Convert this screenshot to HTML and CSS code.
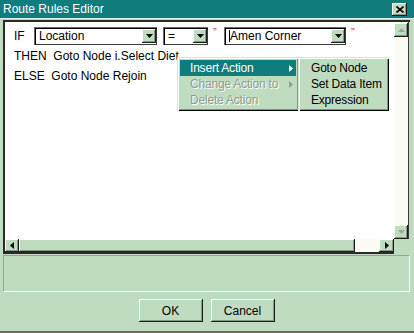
FILE: index.html
```html
<!DOCTYPE html>
<html lang="en">
<head>
    <meta charset="UTF-8">
    <title>Route Rules Editor</title>
    <link rel="stylesheet" href="styles.css">
</head>
<body>
    <div class="window">
        <div class="titlebar">
            <span class="title">Route Rules Editor</span>
            <span class="close raised">
                <svg width="8" height="7" viewBox="0 0 8 7"><path d="M0.5 0.5 L7.5 6.5 M7.5 0.5 L0.5 6.5" stroke="#000" stroke-width="1.6"/></svg>
            </span>
        </div>
        <div class="dialog">
            <div class="panel">
                <div class="rules">
                    <div class="if-row">
                        <span class="kw">IF</span>
                        <div class="combo combo-field">
                            <span class="combo-text">Location</span>
                            <span class="drop raised"><svg width="7" height="4" viewBox="0 0 7 4"><polygon points="0,0 7,0 3.5,4" fill="#000"/></svg></span>
                        </div>
                        <div class="combo combo-op">
                            <span class="combo-text">=</span>
                            <span class="drop raised"><svg width="7" height="4" viewBox="0 0 7 4"><polygon points="0,0 7,0 3.5,4" fill="#000"/></svg></span>
                        </div>
                        <span class="quote">&#8221;</span>
                        <div class="combo combo-value">
                            <span class="combo-text"><span class="caret"></span>Amen Corner</span>
                            <span class="drop raised"><svg width="7" height="4" viewBox="0 0 7 4"><polygon points="0,0 7,0 3.5,4" fill="#000"/></svg></span>
                        </div>
                        <span class="quote">&#8221;</span>
                    </div>
                    <div class="line first">THEN&nbsp;&nbsp;Goto Node i.Select Diet</div>
                    <div class="line">ELSE&nbsp;&nbsp;Goto Node Rejoin</div>

                    <!-- context menu -->
                    <div class="menu">
                        <div class="item active">
                            <span>Insert Action</span>
                            <svg width="4" height="7" viewBox="0 0 4 7"><polygon points="0,0 4,3.5 0,7" fill="#fff"/></svg>
                        </div>
                        <div class="item disabled">
                            <span>Change Action to</span>
                            <svg width="4" height="7" viewBox="0 0 4 7"><polygon points="0,0 4,3.5 0,7" fill="#8e9e8e"/></svg>
                        </div>
                        <div class="item disabled">
                            <span>Delete Action</span>
                        </div>
                    </div>
                    <div class="menu submenu">
                        <div class="item">Goto Node</div>
                        <div class="item">Set Data Item</div>
                        <div class="item">Expression</div>
                    </div>
                </div>
                <div class="vscroll">
                    <span class="sbtn raised"><svg width="7" height="4" viewBox="0 0 7 4"><polygon points="3.5,0 7,4 0,4" fill="#9aa89a"/></svg></span>
                    <span class="sbtn raised"><svg width="7" height="4" viewBox="0 0 7 4"><polygon points="0,0 7,0 3.5,4" fill="#9aa89a"/></svg></span>
                </div>
                <div class="hscroll">
                    <span class="sbtn raised"><svg width="4" height="7" viewBox="0 0 4 7"><polygon points="4,0 0,3.5 4,7" fill="#000"/></svg></span>
                    <span class="thumb raised"></span>
                    <span class="track"></span>
                    <span class="sbtn raised"><svg width="4" height="7" viewBox="0 0 4 7"><polygon points="0,0 4,3.5 0,7" fill="#000"/></svg></span>
                </div>
                <div class="corner"></div>
            </div>
            <div class="status"></div>
            <div class="buttons">
                <button class="raised">OK</button>
                <button class="raised">Cancel</button>
            </div>
        </div>
    </div>
</body>
</html>
```

FILE: styles.css
```css
body {
    margin: 0;
    font-family: "Liberation Sans", Arial, sans-serif;
    font-size: 12px;
    color: #000;
    background: #c0dcc0;
}
.window {
    width: 414px;
    height: 333px;
    box-sizing: border-box;
    background: #c0dcc0;
    border-bottom: 2px solid #7a645c;
    display: flex;
    flex-direction: column;
}
.raised {
    background: #c0dcc0;
    box-shadow: inset -1px -1px 0 #1e1e1e, inset 1px 1px 0 #fff, inset -2px -2px 0 #849c84;
}
.titlebar {
    height: 18px;
    flex: none;
    background: #107c7c;
    color: #fff;
    display: flex;
    align-items: center;
    justify-content: space-between;
    padding: 0 7px 0 3px;
    border-bottom: 1px solid #e2eee2;
}
.close {
    width: 15px;
    height: 13px;
    display: flex;
    align-items: center;
    justify-content: center;
    margin-top: 1px;
}
.dialog {
    flex: 1;
    display: flex;
    flex-direction: column;
    padding: 1px 4px 0 3px;
}
.panel {
    height: 234px;
    box-sizing: border-box;
    border-top: 2px solid #2a2a2a;
    border-left: 2px solid #2a2a2a;
    display: grid;
    grid-template-columns: 1fr 16px;
    grid-template-rows: 1fr 15px;
}
.rules {
    position: relative;
    background: #fff;
    padding: 5px 0 0 9px;
}
.if-row {
    display: flex;
    align-items: center;
    height: 18px;
}
.kw {
    width: 20px;
}
.combo {
    height: 18px;
    box-sizing: border-box;
    background: #fff;
    box-shadow: inset 1px 1px 0 #6a6a6a, inset 2px 2px 0 #000, inset -1px -1px 0 #3a3a3a;
    padding: 2px 1px 2px 2px;
    display: flex;
    align-items: center;
}
.combo-text {
    flex: 1;
    padding-left: 3px;
    display: flex;
    align-items: center;
    white-space: nowrap;
}
.caret {
    width: 1px;
    height: 12px;
    background: #000;
}
.drop {
    width: 14px;
    height: 14px;
    display: flex;
    align-items: center;
    justify-content: center;
}
.combo-field {
    width: 123px;
}
.combo-op {
    width: 45px;
    margin-left: 6px;
}
.combo-value {
    width: 122px;
}
.quote {
    color: #d03030;
    font-size: 11px;
    width: 16px;
    padding-left: 5px;
    box-sizing: border-box;
    align-self: flex-start;
    line-height: 10px;
}
.line {
    height: 20px;
    line-height: 20px;
    white-space: nowrap;
}
.line.first {
    margin-top: 1px;
}
.menu {
    position: absolute;
    left: 172px;
    top: 35px;
    width: 122px;
    height: 54px;
    box-sizing: border-box;
    padding: 3px;
    background: #c0dcc0;
    letter-spacing: -0.2px;
    box-shadow: inset 1px 1px 0 #d4e6d4, inset 2px 2px 0 #fff, inset -1px -1px 0 #000, inset -2px -2px 0 #7f967f;
}
.submenu {
    left: 293px;
    width: 91px;
}
.item {
    height: 16px;
    padding: 0 3px 0 10px;
    display: flex;
    align-items: center;
    justify-content: space-between;
    white-space: nowrap;
}
.item.active {
    background: #107c7c;
    color: #fff;
}
.item.disabled {
    color: #8e9e8e;
    text-shadow: 1px 1px 0 #fff;
}
.submenu .item {
    padding-left: 10px;
}
.vscroll {
    background: #fbfaf4;
    border-right: 1px solid #3a3a3a;
    margin-right: 1px;
    padding-top: 1px;
    display: flex;
    flex-direction: column;
    justify-content: space-between;
}
.sbtn {
    width: 14px;
    height: 14px;
    flex: none;
    display: flex;
    align-items: center;
    justify-content: center;
}
.hscroll {
    display: flex;
    border-bottom: 2px solid #2a2a2a;
}
.hscroll .sbtn {
    height: 13px;
}
.hscroll .sbtn:last-child {
    width: 15px;
}
.thumb {
    width: 336px;
    height: 13px;
}
.track {
    flex: 1;
    background: #fbfaf4;
}
.status {
    height: 37px;
    margin-top: 1px;
    box-sizing: border-box;
    border: 1px solid;
    border-color: #8fa88f #fff #fff #8fa88f;
}
.buttons {
    display: flex;
    justify-content: center;
    gap: 8px;
    padding-top: 7px;
}
button {
    width: 64px;
    height: 23px;
    border: none;
    font-family: "Liberation Sans", Arial, sans-serif;
    font-size: 12px;
    color: #000;
    padding: 0;
}
```
